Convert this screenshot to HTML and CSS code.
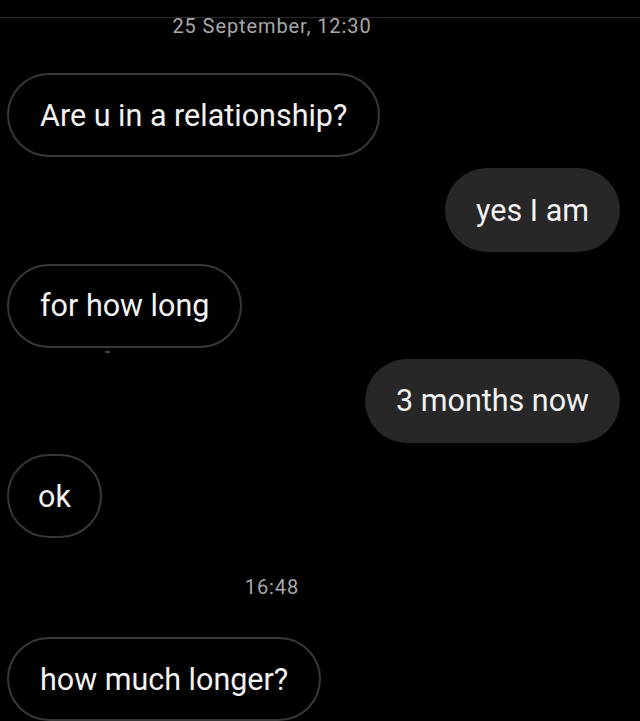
FILE: index.html
```html
<!DOCTYPE html>
<html lang="en">
<head>
<meta charset="utf-8">
<title>Chat</title>
<link rel="stylesheet" href="styles.css">
</head>
<body>
<div class="chat">
  <div class="divider"></div>
  <div class="stamp stamp-top">25 September, 12:30</div>
  <div class="row in first"><div class="bubble outline">Are u in a relationship?</div></div>
  <div class="row out"><div class="bubble filled">yes I am</div></div>
  <div class="row in"><div class="bubble outline speck">for how long</div></div>
  <div class="row out"><div class="bubble filled">3 months now</div></div>
  <div class="row in"><div class="bubble outline short">ok</div></div>
  <div class="stamp stamp-mid">16:48</div>
  <div class="row in last"><div class="bubble outline">how much longer?</div></div>
</div>
</body>
</html>
```
FILE: styles.css
```css
html, body {
  margin: 0;
  padding: 0;
  background: #000;
}
body {
  width: 640px;
  height: 721px;
  overflow: hidden;
  font-family: Roboto, "Liberation Sans", sans-serif;
}
.chat {
  display: flex;
  flex-direction: column;
}
.divider {
  height: 1px;
  margin-top: 17px;
  background: #2c2c2c;
}
.stamp {
  color: #a8a8a8;
  font-size: 20px;
  letter-spacing: 0.9px;
  line-height: 16px;
  text-align: center;
  padding-right: 96px;
}
.stamp-top {
  margin-top: 0;
}
.stamp-mid {
  margin-top: 41px;
}
.row {
  display: flex;
  margin-top: 11.25px;
}
.row.first {
  margin-top: 39px;
}
.row.last {
  margin-top: 42px;
}
.row.in {
  justify-content: flex-start;
  padding-left: 7px;
}
.row.out {
  justify-content: flex-end;
  padding-right: 20px;
}
.bubble {
  position: relative;
  box-sizing: border-box;
  height: 84px;
  border-radius: 42px;
  padding: 0 31px;
  display: inline-flex;
  align-items: center;
  font-size: 30.5px;
  color: #f2f2f2;
  white-space: nowrap;
}
.bubble.outline {
  border: 2px solid #383838;
  padding: 0 31px;
}
.bubble.outline.short {
  padding: 0 29px;
}
.bubble.filled {
  background: #272727;
}
.bubble.speck::after {
  content: "";
  position: absolute;
  left: 96px;
  bottom: -7px;
  width: 5px;
  height: 2px;
  background: #4a4a4a;
  border-radius: 1px;
}
```
